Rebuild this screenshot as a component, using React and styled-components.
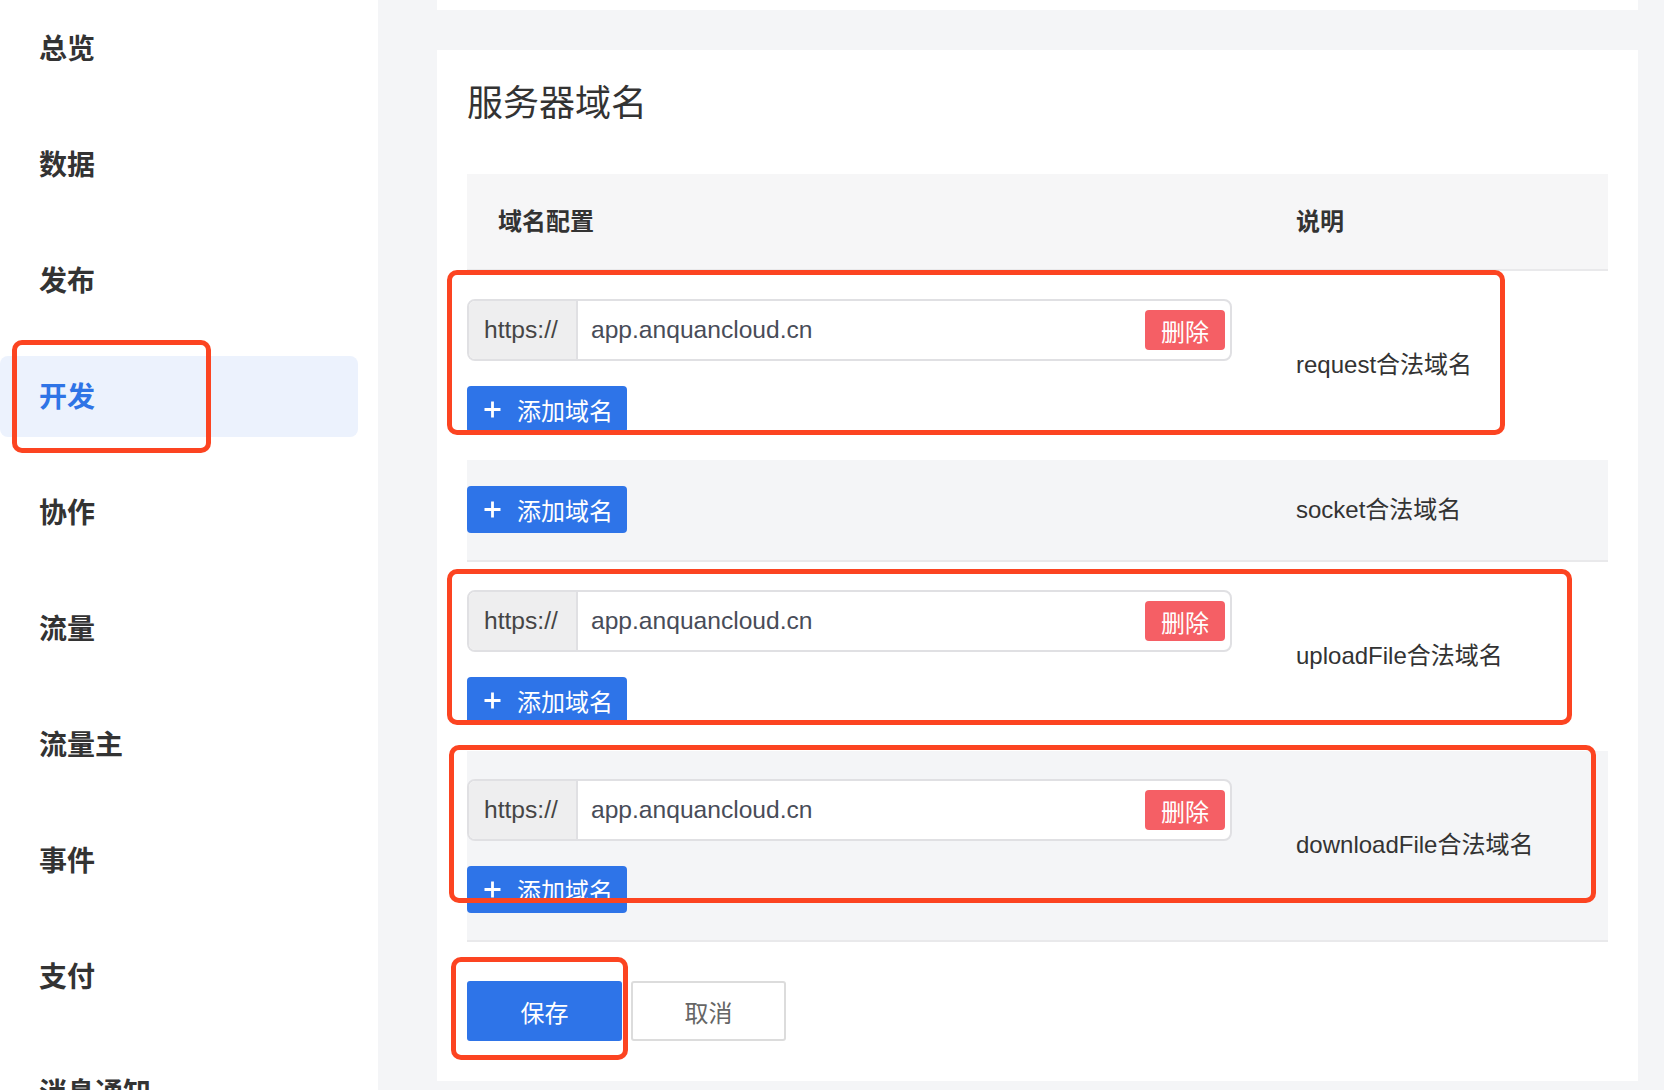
import React from "react";
import styled, { createGlobalStyle } from "styled-components";

const Global = createGlobalStyle`
  html, body, #root { margin: 0; padding: 0; height: 100%; }
  body {
    background: #f4f5f7;
    font-family: "Liberation Sans", "Noto Sans CJK SC", sans-serif;
    color: #333;
    overflow: hidden;
  }
  * { box-sizing: border-box; }
  button { font-family: inherit; cursor: pointer; }
`;

const Page = styled.div`
  position: relative;
  display: flex;
  height: 100vh;
  overflow: hidden;
`;

const Sidebar = styled.nav`
  width: 378px;
  flex-shrink: 0;
  background: #fff;
  padding-top: 8px;
  display: flex;
  flex-direction: column;
  gap: 35px;
`;

const MenuItem = styled.div`
  flex-shrink: 0;
  height: 81px;
  margin-right: 20px;
  border-radius: 8px;
  display: flex;
  align-items: center;
  padding: 0 0 4px 39px;
  font-family: "Noto Sans CJK SC", sans-serif;
  font-size: 28px;
  font-weight: 700;
  color: ${(p) => (p.$active ? "#2f74e6" : "#333")};
  background: ${(p) => (p.$active ? "#ecf2fd" : "transparent")};
`;

const Main = styled.main`
  flex: 1;
  padding: 0 26px 11px 59px;
  display: flex;
  flex-direction: column;
`;

const TopStrip = styled.div`
  height: 10px;
  background: #fff;
  margin-bottom: 40px;
  flex-shrink: 0;
`;

const Card = styled.section`
  background: #fff;
  padding: 29px 30px 40px;
`;

const Title = styled.h2`
  margin: 0 0 45px;
  font-size: 36px;
  line-height: 50px;
  font-weight: 400;
  color: #333;
`;

const Table = styled.div`
  display: flex;
  flex-direction: column;
`;

const HeaderRow = styled.div`
  display: grid;
  grid-template-columns: 829px 1fr;
  align-items: center;
  height: 97px;
  background: #f6f6f7;
  border-bottom: 2px solid #e9e9eb;
`;

const HeaderCell = styled.div`
  padding-left: ${(p) => p.$indent || 0}px;
  font-size: 24px;
  font-weight: 700;
  color: #333;
  line-height: 32px;
`;

const Row = styled.div`
  display: grid;
  grid-template-columns: 829px 1fr;
  align-items: center;
  padding: 26px 0 27px;
  background: ${(p) => (p.$striped ? "#f4f5f7" : "#fff")};
  border-bottom: ${(p) => (p.$striped ? "2px solid #e9e9eb" : "none")};
`;

const DomainCell = styled.div`
  display: flex;
  flex-direction: column;
  align-items: flex-start;
  gap: 25px;
`;

const InputGroup = styled.div`
  margin-top: 2px;
  width: 765px;
  height: 62px;
  display: flex;
  border: 2px solid #e0e0e3;
  border-radius: 8px;
  overflow: hidden;
  background: #fff;
`;

const Prefix = styled.div`
  width: 109px;
  flex-shrink: 0;
  display: flex;
  align-items: center;
  padding-left: 15px;
  background: #eeeeef;
  border-right: 2px solid #e0e0e3;
  font-size: 24.6px;
  color: #454545;
`;

const Field = styled.div`
  flex: 1;
  display: flex;
  align-items: center;
  justify-content: space-between;
  padding: 0 5px 0 13px;
  font-size: 24.6px;
  color: #484c58;
`;

const DeleteButton = styled.button`
  width: 80px;
  height: 40px;
  border: none;
  border-radius: 4px;
  background: #f55f65;
  color: #fff;
  font-size: 24px;
  padding: 0;
`;

const AddButton = styled.button`
  width: 160px;
  height: 47px;
  border: none;
  border-radius: 4px;
  background: #2e74e8;
  color: #fff;
  display: flex;
  align-items: center;
  gap: 15px;
  padding: 0 0 0 16px;
  font-size: 24px;
`;

const Desc = styled.div`
  font-size: 24px;
  color: #333;
  line-height: 32px;
`;

const Actions = styled.div`
  display: flex;
  gap: 9px;
  margin-top: 39px;
`;

const ActionButton = styled.button`
  width: 155px;
  height: 60px;
  border-radius: 3px;
  font-size: 24px;
  padding: 0;
  background: ${(p) => (p.$primary ? "#2e74e8" : "#fff")};
  color: ${(p) => (p.$primary ? "#fff" : "#666")};
  border: ${(p) => (p.$primary ? "none" : "2px solid #dcdcdc")};
`;

const Annotation = styled.div`
  position: absolute;
  left: ${(p) => p.$x}px;
  top: ${(p) => p.$y}px;
  width: ${(p) => p.$w}px;
  height: ${(p) => p.$h}px;
  border: 5px solid #fc4421;
  border-radius: 10px;
  pointer-events: none;
`;

const PlusIcon = () => (
  <svg width="19" height="19" viewBox="0 0 19 19" aria-hidden="true">
    <path d="M9.5 1.5v16M1.5 9.5h16" stroke="#fff" strokeWidth="2.8" fill="none" />
  </svg>
);

const menu = ["总览", "数据", "发布", "开发", "协作", "流量", "流量主", "事件", "支付", "消息通知"];

const rows = [
  { domains: ["app.anquancloud.cn"], desc: "request合法域名", striped: false },
  { domains: [], desc: "socket合法域名", striped: true },
  { domains: ["app.anquancloud.cn"], desc: "uploadFile合法域名", striped: false },
  { domains: ["app.anquancloud.cn"], desc: "downloadFile合法域名", striped: true },
];

const annotations = [
  { x: 12, y: 340, w: 199, h: 113 },
  { x: 447, y: 270, w: 1058, h: 165 },
  { x: 447, y: 569, w: 1125, h: 156 },
  { x: 449, y: 745, w: 1147, h: 158 },
  { x: 451, y: 957, w: 177, h: 103 },
];

export default function App() {
  return (
    <>
      <Global />
      <Page>
        <Sidebar>
          {menu.map((m) => (
            <MenuItem key={m} $active={m === "开发"}>
              {m}
            </MenuItem>
          ))}
        </Sidebar>
        <Main>
          <TopStrip />
          <Card>
            <Title>服务器域名</Title>
            <Table>
              <HeaderRow>
                <HeaderCell $indent={31}>域名配置</HeaderCell>
                <HeaderCell>说明</HeaderCell>
              </HeaderRow>
              {rows.map((r) => (
                <Row key={r.desc} $striped={r.striped}>
                  <DomainCell>
                    {r.domains.map((d, i) => (
                      <InputGroup key={i}>
                        <Prefix>https://</Prefix>
                        <Field>
                          <span>{d}</span>
                          <DeleteButton>删除</DeleteButton>
                        </Field>
                      </InputGroup>
                    ))}
                    <AddButton>
                      <PlusIcon />
                      <span>添加域名</span>
                    </AddButton>
                  </DomainCell>
                  <Desc>{r.desc}</Desc>
                </Row>
              ))}
            </Table>
            <Actions>
              <ActionButton $primary>保存</ActionButton>
              <ActionButton>取消</ActionButton>
            </Actions>
          </Card>
        </Main>
        {annotations.map((a, i) => (
          <Annotation key={i} $x={a.x} $y={a.y} $w={a.w} $h={a.h} />
        ))}
      </Page>
    </>
  );
}
